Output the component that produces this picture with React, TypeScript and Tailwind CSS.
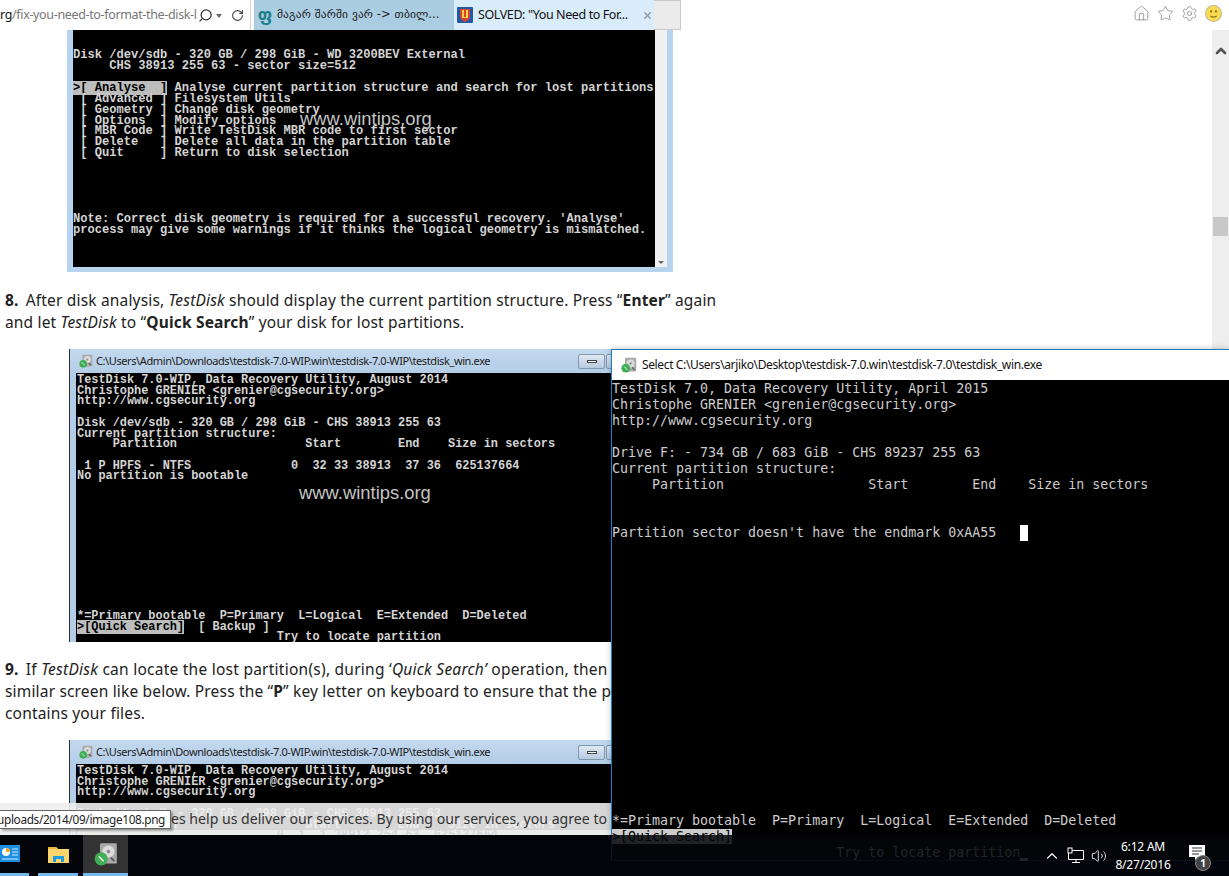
import { ChevronUp, Home, RotateCw, Search, Settings, Star, Volume2, X } from "lucide-react";

const firstScreen = [
  "Disk /dev/sdb - 320 GB / 298 GiB - WD 3200BEV External",
  "     CHS 38913 255 63 - sector size=512",
  "",
  "",
  " [ Advanced ] Filesystem Utils",
  " [ Geometry ] Change disk geometry",
  " [ Options  ] Modify options",
  " [ MBR Code ] Write TestDisk MBR code to first sector",
  " [ Delete   ] Delete all data in the partition table",
  " [ Quit     ] Return to disk selection",
  "",
  "",
  "",
  "",
  "",
  "Note: Correct disk geometry is required for a successful recovery. 'Analyse'",
  "process may give some warnings if it thinks the logical geometry is mismatched.",
];

const secondScreen = [
  "TestDisk 7.0-WIP, Data Recovery Utility, August 2014",
  "Christophe GRENIER <grenier@cgsecurity.org>",
  "http://www.cgsecurity.org",
  "",
  "Disk /dev/sdb - 320 GB / 298 GiB - CHS 38913 255 63",
  "Current partition structure:",
  "     Partition                  Start        End    Size in sectors",
  "",
  " 1 P HPFS - NTFS              0  32 33 38913  37 36  625137664",
  "No partition is bootable",
  ...Array(12).fill(""),
  "*=Primary bootable  P=Primary  L=Logical  E=Extended  D=Deleted",
];

const thirdScreen = [
  "TestDisk 7.0-WIP, Data Recovery Utility, August 2014",
  "Christophe GRENIER <grenier@cgsecurity.org>",
  "http://www.cgsecurity.org",
  "",
  "Disk /dev/sdb - 320 GB / 298 GiB - CHS 38913 255 63",
  "     Partition                  Start        End    Size in sectors",
];

const newScreenTop = [
  "TestDisk 7.0, Data Recovery Utility, April 2015",
  "Christophe GRENIER <grenier@cgsecurity.org>",
  "http://www.cgsecurity.org",
  "",
  "Drive F: - 734 GB / 683 GiB - CHS 89237 255 63",
  "Current partition structure:",
  "     Partition                  Start        End    Size in sectors",
  "",
  "",
];

function DiskIcon({ className }: { className: string }) {
  return (
    <svg viewBox="0 0 20 20" className={className}>
      <rect x="5" y="1" width="14" height="17" rx="1" fill="#a9a9a9" />
      <circle cx="12" cy="8" r="5" fill="#dcdcdc" />
      <circle cx="12" cy="8" r="1.5" fill="#8a8a8a" />
      <path d="M14 13l3 3" stroke="#555" strokeWidth="1.5" />
      <circle cx="6" cy="14" r="5.5" fill="#3fae55" />
      <path d="M4 12l4 4" stroke="#fff" strokeWidth="1.2" />
    </svg>
  );
}

function ConsoleLines({ lines, className }: { lines: string[]; className: string }) {
  return (
    <div className={`whitespace-pre font-['Liberation_Mono',monospace] ${className}`}>
      {lines.map((line, i) => (
        <div key={i} className="h-[1lh]">
          {line}
        </div>
      ))}
    </div>
  );
}

function Watermark({ className }: { className: string }) {
  return (
    <span className={`absolute font-['Liberation_Sans',sans-serif] text-[18.4px] leading-5 text-[#c4c4c4] ${className}`}>
      www.wintips.org
    </span>
  );
}

function Win7Title() {
  return (
    <div className="flex h-[24px] items-center bg-gradient-to-b from-[#c3d9ef] to-[#b4cde6] pl-[9px]">
      <DiskIcon className="h-[14px] w-[14px]" />
      <span className="ml-[3px] whitespace-nowrap font-['Noto_Sans',sans-serif] text-[11px] tracking-[-0.4px] text-[#1a1a1a]">
        {"C:\\Users\\Admin\\Downloads\\testdisk-7.0-WIP.win\\testdisk-7.0-WIP\\testdisk_win.exe"}
      </span>
      <div className="ml-auto mr-[6px] flex gap-px">
        <div className="flex h-[15px] w-[27px] items-center justify-center rounded-[2px] border border-[#7f97b2] bg-gradient-to-b from-[#dfe9f4] to-[#b7cadf]">
          <div className="h-[3px] w-[10px] border border-[#444] bg-white" />
        </div>
        <div className="h-[15px] w-[27px] rounded-[2px] border border-[#7f97b2] bg-gradient-to-b from-[#dfe9f4] to-[#b7cadf]" />
      </div>
    </div>
  );
}

export default function App() {
  return (
    <div className="relative h-[876px] w-[1229px] overflow-hidden bg-[#03060a] font-['Noto_Sans',sans-serif]">
      {/* browser chrome */}
      <div className="flex h-[30px] items-stretch bg-white">
        <div className="flex w-[251px] items-center border-r border-[#d5d5d5] pt-px">
          <span className="w-[197px] overflow-hidden whitespace-nowrap text-[12.5px] tracking-[-0.35px] text-[#777]">
            <span className="text-[#111]">rg</span>/fix-you-need-to-format-the-disk-l
          </span>
          <Search className="ml-[1px] h-[15px] w-[15px] -scale-x-100 text-[#333]" strokeWidth={2} />
          <span className="ml-[3px] mt-px h-0 w-0 border-x-[3px] border-t-[4px] border-x-transparent border-t-[#666]" />
          <RotateCw className="ml-[9px] h-[13px] w-[13px] text-[#444]" strokeWidth={2} />
        </div>
        <div className="ml-[3px] flex w-[200px] items-center gap-[3px] bg-[#aacde2] pl-[2px]">
          <span className="w-[18px] text-center font-['DejaVu_Sans',sans-serif] text-[17px] font-bold leading-none text-[#1f7f8c]">ფ</span>
          <span className="whitespace-nowrap font-['DejaVu_Sans',sans-serif] text-[11.5px] tracking-[0.1px] text-[#222]">
            მაგარ შარში ვარ -&gt; თბილ...
          </span>
        </div>
        <div className="flex w-[200px] items-center bg-[#d9ecf9] pl-[3px]">
          <svg viewBox="0 0 16 16" className="h-4 w-4">
            <rect width="16" height="16" rx="1" fill="#2458a8" />
            <path d="M3 2h10v7c0 3-2 4-5 6-3-2-5-3-5-6z" fill="#d8452b" />
            <path d="M5 3h2v7h2V3h2v8H5z" fill="#f6d24a" />
          </svg>
          <span className="ml-[5px] whitespace-nowrap text-[12.5px] tracking-[-0.4px] text-[#111]">
            SOLVED: "You Need to For...
          </span>
          <X className="ml-[14px] h-[11px] w-[11px] text-[#8a9aa8]" strokeWidth={3} />
        </div>
        <div className="w-[27px] border-y border-r border-[#c9c9c9] bg-[#ebebeb]" />
        <div className="ml-auto mr-[7px] flex items-center gap-[7px] pb-[4px]">
          <Home className="h-[17px] w-[17px] text-[#8f8f8f]" strokeWidth={1.2} />
          <Star className="h-[17px] w-[17px] text-[#8f8f8f]" strokeWidth={1.2} />
          <Settings className="h-[17px] w-[17px] text-[#8f8f8f]" strokeWidth={1.2} />
          <svg viewBox="0 0 16 16" className="h-[17px] w-[17px]">
            <circle cx="8" cy="8" r="7.5" fill="#fbdb4e" stroke="#b9b9a0" />
            <circle cx="5.7" cy="6" r="1" fill="#7a6a20" />
            <circle cx="10.3" cy="6" r="1" fill="#7a6a20" />
            <path d="M5 10.3c1.5 1.5 4.5 1.5 6 0" stroke="#7a6a20" fill="none" />
          </svg>
        </div>
      </div>

      {/* page with scrollbar */}
      <div className="flex h-[805px]">
        <div className="w-[1212px] overflow-hidden bg-white text-[15.5px] leading-[22px] tracking-[0.17px] text-[#222]">
          <div className="relative ml-[67px] flex h-[242px] w-[606px] bg-[#b7d4ee] px-[6px] pb-[5px] tracking-normal">
            <div className="relative w-[582px] overflow-hidden bg-black pt-[20px]">
              <ConsoleLines
                lines={firstScreen.slice(0, 3)}
                className="text-[12.1px] font-bold leading-[10.93px] text-[#d4d4d4]"
              />
              <div className="whitespace-pre font-['Liberation_Mono',monospace] text-[12.1px] font-bold leading-[10.93px] text-[#d4d4d4]">
                <span className="bg-[#bdbdbd] text-black">{">[ Analyse  ]"}</span> Analyse current partition structure and search for lost partitions
              </div>
              <ConsoleLines
                lines={firstScreen.slice(4)}
                className="text-[12.1px] font-bold leading-[10.93px] text-[#d4d4d4]"
              />
              <Watermark className="left-[227px] top-[79px]" />
            </div>
            <div className="flex w-[12px] items-end justify-center bg-[#f0f0f0] pb-[3px]">
              <span className="h-0 w-0 border-x-[3px] border-t-[3px] border-x-transparent border-t-[#666]" />
            </div>
          </div>

          <p className="ml-[5px] mt-[17px] whitespace-nowrap">
            <b className="mr-[3px]">8.</b> After disk analysis, <i>TestDisk</i> should display the current partition structure. Press “<b>Enter</b>” again
            <br />
            and let <i>TestDisk</i> to “<b>Quick Search</b>” your disk for lost partitions.
          </p>

          <div className="ml-[69px] mt-[16px] h-[293px] w-[570px] border-l border-[#333] bg-[#b4cde6] tracking-normal">
            <Win7Title />
            <div className="relative ml-[6px] h-[269px] overflow-hidden bg-black pl-px pt-[2px]">
              <ConsoleLines
                lines={secondScreen}
                className="text-[11.9px] font-bold leading-[10.73px] text-[#d4d4d4]"
              />
              <div className="whitespace-pre font-['Liberation_Mono',monospace] text-[11.9px] font-bold leading-[10.73px] text-[#d4d4d4]">
                <span className="bg-[#bdbdbd] text-black">{">[Quick Search]"}</span>  [ Backup ]
              </div>
              <div className="whitespace-pre font-['Liberation_Mono',monospace] text-[11.9px] font-bold leading-[10.73px] text-[#d4d4d4]">
                {"                            Try to locate partition"}
              </div>
              <Watermark className="left-[223px] top-[110px]" />
            </div>
          </div>

          <p className="ml-[5px] mt-[16px] whitespace-nowrap">
            <b className="mr-[3px]">9.</b>{" "}
            <span className="tracking-[0.25px]">
              If <i>TestDisk</i> can locate the lost partition(s), during ‘<i>Quick Search’</i> operation, then
            </span>
            <br />
            similar screen like below. Press the “<b>P</b>” key letter on keyboard to ensure that the partition
            <br />
            contains your files.
          </p>

          <div className="ml-[69px] mt-[16px] h-[95px] w-[570px] border-l border-[#333] bg-[#b4cde6] tracking-normal">
            <Win7Title />
            <div className="ml-[6px] h-[71px] overflow-hidden bg-black pl-px pt-[2px]">
              <ConsoleLines
                lines={thirdScreen}
                className="text-[11.9px] font-bold leading-[10.73px] text-[#d4d4d4]"
              />
              <div className="whitespace-pre bg-[#c4dcc4] font-['Liberation_Mono',monospace] text-[11.9px] font-bold leading-[10.73px] text-black">
                {"                            0  1  1 38912 254 63  625137664"}
              </div>
            </div>
          </div>
        </div>

        {/* scrollbar */}
        <div className="flex w-[17px] flex-col items-center bg-[#eeeeee] pt-[13px]">
          <ChevronUp className="h-4 w-4 text-[#555]" strokeWidth={4} />
          <div className="mt-[158px] h-[19px] w-[15px] bg-[#c8c8c8]" />
        </div>
      </div>

      {/* cookie notice */}
      <div className="absolute left-0 top-[803px] flex h-[32px] w-[612px] items-center justify-end whitespace-nowrap bg-[#eeeeee]/90 pr-[5px] text-[14.1px] text-[#333]">
        Cookies help us deliver our services. By using our services, you agree to
      </div>

      {/* link tooltip */}
      <div className="absolute left-0 top-[810px] flex h-[19px] w-[171px] items-center justify-end overflow-hidden border border-l-0 border-[#666] bg-white pr-[5px] text-[11.8px] tracking-[-0.35px] text-[#222] shadow-[2px_2px_2px_rgba(0,0,0,0.3)]">
        uploads/2014/09/image108.png
      </div>

      {/* foreground console window */}
      <div className="absolute left-[611px] top-[349px] h-[512px] w-[618px] border-b border-l border-t border-[#1b7fc4] border-b-[#1d3a4f] bg-black shadow-[0_0_6px_rgba(0,0,0,0.25)]">
        <div className="flex h-[30px] items-center bg-white pl-[9px]">
          <DiskIcon className="h-4 w-4" />
          <span className="ml-[5px] whitespace-nowrap text-[12px] tracking-[-0.37px] text-[#111]">
            {"Select C:\\Users\\arjiko\\Desktop\\testdisk-7.0.win\\testdisk-7.0\\testdisk_win.exe"}
          </span>
        </div>
        <div className="whitespace-pre pt-px font-['DejaVu_Sans_Mono',monospace] text-[13.3px] leading-4 text-[#cccccc]">
          {newScreenTop.map((line, i) => (
            <div key={i} className="h-4">
              {line}
            </div>
          ))}
          <div className="flex h-4">
            {"Partition sector doesn't have the endmark 0xAA55   "}
            <span className="h-4 w-2 bg-white" />
          </div>
          <div className="h-[272px]" />
          <div className="h-4">*=Primary bootable  P=Primary  L=Logical  E=Extended  D=Deleted</div>
          <div className="h-4">
            <span className="bg-[#cccccc] text-black">{">[Quick Search]"}</span>
          </div>
          <div className="flex h-4">
            {"                            Try to locate partition                     ".slice(0, 51)}
            <span className="mt-[13px] h-[3px] w-2 bg-[#cccccc]" />
          </div>
        </div>
      </div>

      {/* taskbar */}
      <div className="absolute bottom-0 left-0 flex h-[41px] w-full bg-[#03060a]/[0.86]">
        <div className="flex w-[29px] items-center border-b-[3px] border-[#76b9ed]">
          <svg viewBox="0 0 20 17" className="mb-[2px] h-[17px] w-5">
            <rect width="20" height="17" fill="#1c8fe0" />
            <circle cx="6" cy="7" r="4" fill="#fff" />
            <path d="M6 7V3a4 4 0 0 1 4 4z" fill="#f5a623" />
            <path d="M12 4h6M12 7h6M12 10h6M2 14h16" stroke="#cfe9fb" strokeWidth="1.2" />
          </svg>
        </div>
        <div className="ml-[9px] flex w-[40px] items-center justify-center border-b-[3px] border-[#76b9ed]">
          <svg viewBox="0 0 21 18" className="h-[18px] w-[21px]">
            <path d="M0 2h8l2 2h11v14H0z" fill="#fbd46b" />
            <path d="M0 2h8l2 2H0z" fill="#e8b53f" />
            <path d="M5 17v-6h11v6h-3v-3H8v3z" fill="#1f9be6" />
          </svg>
        </div>
        <div className="ml-[5px] flex w-[45px] items-center justify-center border-b-[3px] border-[#76b9ed] bg-[#333333]">
          <DiskIcon className="h-[24px] w-[24px]" />
        </div>
        <div className="ml-auto flex items-center text-white">
          <ChevronUp className="h-[18px] w-[18px]" strokeWidth={1.5} />
          <svg viewBox="0 0 18 18" className="ml-[6px] h-[18px] w-[18px]" fill="none" stroke="#fff">
            <path d="M1.5 3.5h15v9h-15zM9 12.5v3M5 15.5h8" />
            <rect x="1" y="1" width="4" height="5" fill="#000" />
          </svg>
          <Volume2 className="ml-[6px] h-4 w-4" strokeWidth={1.3} />
          <div className="ml-[3px] w-[66px] text-center text-[12px] leading-[18px] tracking-[-0.2px]">
            <div>6:12 AM</div>
            <div>8/27/2016</div>
          </div>
          <div className="relative mb-auto ml-[13px] mr-[22px] mt-[10px] h-[24px] w-[18px]">
            <svg viewBox="0 0 16 15" className="h-[15px] w-4">
              <path d="M0 0h16v12H9l-3 3v-3H0z" fill="#fff" />
              <path d="M3 3h10M3 6h10M3 9h7" stroke="#333" />
            </svg>
            <span className="absolute left-[6px] top-[10px] flex h-4 w-4 items-center justify-center rounded-full border border-[#888] bg-[#444] text-[10px] font-bold leading-none text-white">
              1
            </span>
          </div>
        </div>
      </div>
    </div>
  );
}
